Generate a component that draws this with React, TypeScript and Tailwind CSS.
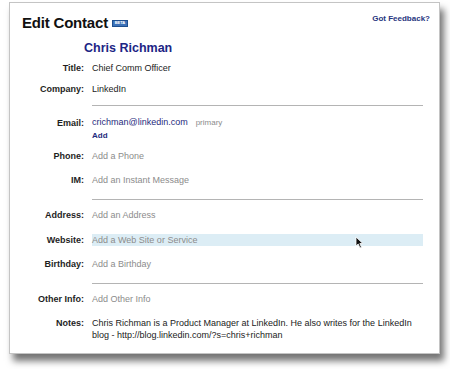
import React from "react";

const font = { fontFamily: '"Liberation Sans", Arial, sans-serif' };

function Row({ label, children, className = "" }: { label: string; children: React.ReactNode; className?: string }) {
  return (
    <div className={`flex items-center ${className}`}>
      <div className="w-[74px] shrink-0 text-right text-[9px] font-bold leading-[12px] text-[#1e1e1e]">{label}</div>
      <div className="ml-[8px] w-[331px] text-[9px] leading-[12px]">{children}</div>
    </div>
  );
}

function Divider({ className = "" }: { className?: string }) {
  return <div className={`ml-[82px] h-px w-[331px] bg-[#b4b4b4] ${className}`} />;
}

function Placeholder({ children }: { children: React.ReactNode }) {
  return <span className="text-[#8c8c8c]">{children}</span>;
}

export default function App() {
  return (
    <div className="h-[369px] w-[450px] bg-white pl-[9px] pt-[2px]" style={font}>
      <div className="relative h-[352px] w-[431px] border border-[#c4c4c4] bg-white shadow-[4px_7px_7px_rgba(0,0,0,0.55)]">
        {/* header */}
        <div className="flex items-start justify-between pl-[12px] pr-[9px] pt-[11px]">
          <div className="flex items-center">
            <span className="text-[15px] font-bold leading-[17px] tracking-[-0.2px] text-[#111]">Edit Contact</span>
            <span className="ml-[4px] mt-[1px] flex h-[7px] w-[16px] items-center justify-center border border-[#1d4f8f] bg-[#3d72b8] text-[4px] font-bold leading-none text-white">
              BETA
            </span>
          </div>
          <a className="text-[8px] font-bold leading-[10px] text-[#27357e]">Got Feedback?</a>
        </div>

        <div className="ml-[74px] mt-[9px] text-[12.5px] font-bold leading-[16px] text-[#1d2585]">Chris Richman</div>

        <Row label="Title:" className="mt-[6px]">
          <span className="text-[#222]">Chief Comm Officer</span>
        </Row>
        <Row label="Company:" className="mt-[9px]">
          <span className="text-[#222]">LinkedIn</span>
        </Row>

        <Divider className="mt-[10px]" />

        <Row label="Email:" className="mt-[10px]">
          <span className="text-[#1f2b7d]">crichman@linkedin.com</span>
          <span className="ml-[8px] text-[8px] text-[#8c8c8c]">primary</span>
        </Row>
        <div className="ml-[82px] mt-[2px] text-[8px] font-bold leading-[10px] text-[#1f2b7d]">Add</div>

        <Row label="Phone:" className="mt-[9px]">
          <Placeholder>Add a Phone</Placeholder>
        </Row>
        <Row label="IM:" className="mt-[12px]">
          <Placeholder>Add an Instant Message</Placeholder>
        </Row>

        <Divider className="mt-[13px]" />

        <Row label="Address:" className="mt-[9px]">
          <Placeholder>Add an Address</Placeholder>
        </Row>
        <Row label="Website:" className="mt-[13px]">
          <div className="bg-[#dcedf5]">
            <Placeholder>Add a Web Site or Service</Placeholder>
          </div>
        </Row>
        <Row label="Birthday:" className="mt-[12px]">
          <Placeholder>Add a Birthday</Placeholder>
        </Row>

        <Divider className="mt-[13px]" />

        <Row label="Other Info:" className="mt-[9px]">
          <Placeholder>Add Other Info</Placeholder>
        </Row>
        <div className="mt-[12px] flex items-start">
          <div className="w-[74px] shrink-0 text-right text-[9px] font-bold leading-[12px] text-[#1e1e1e]">Notes:</div>
          <div className="ml-[8px] w-[331px] text-[9px] leading-[12px] text-[#222]">
            Chris Richman is a Product Manager at LinkedIn. He also writes for the LinkedIn
            <br />
            blog - http://blog.linkedin.com/?s=chris+richman
          </div>
        </div>

        {/* mouse pointer */}
        <svg className="absolute left-[345px] top-[233px]" width="9" height="13" viewBox="0 0 9 13">
          <path d="M1 1 L1 10 L3.2 8 L5 12 L6.5 11.3 L4.8 7.5 L7.8 7.5 Z" fill="#111" stroke="#fff" strokeWidth="0.8" />
        </svg>
      </div>
    </div>
  );
}
